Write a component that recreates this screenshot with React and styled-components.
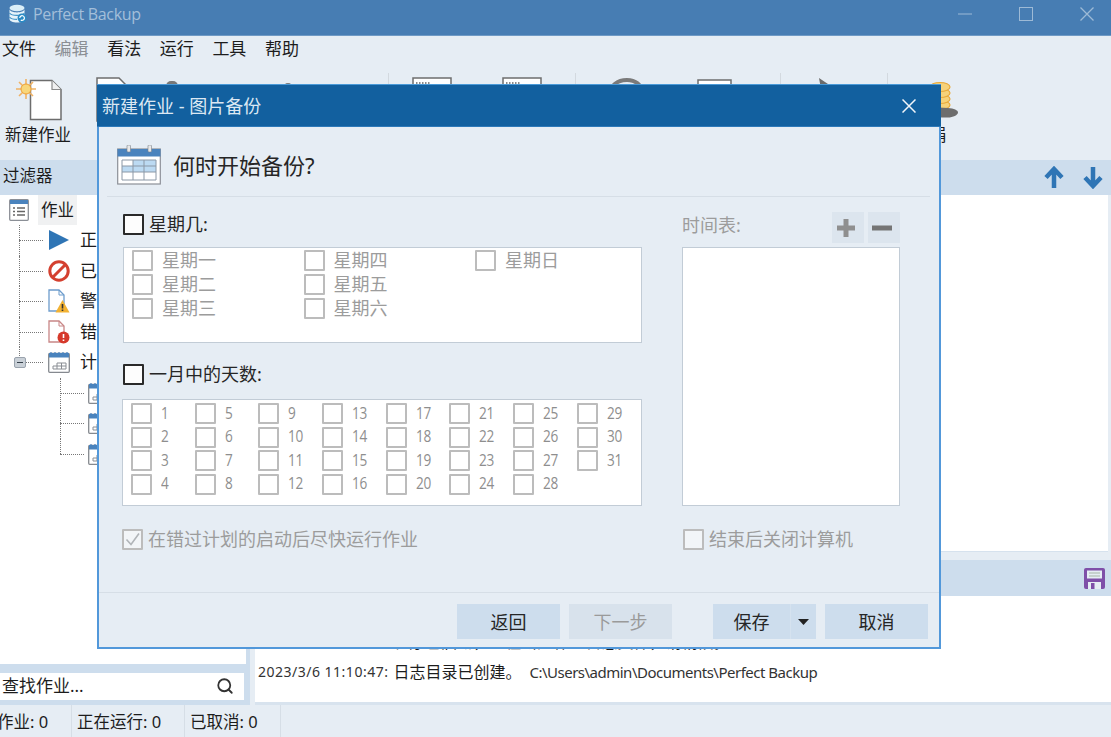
import React from "react"
import styled, { createGlobalStyle } from "styled-components"
import { Search } from "lucide-react"

const FONT = `"Noto Sans", "Noto Sans CJK SC", sans-serif`
const WEEK = ["星期一", "星期二", "星期三", "星期四", "星期五", "星期六", "星期日"]
const DAYS = Array.from({ length: 31 }, (_, i) => i + 1)

const Global = createGlobalStyle`
  html, body { margin: 0; padding: 0; background: #e6edf4; }
  body { font-family: ${FONT}; color: #1c1c1c; }
  * { box-sizing: border-box; }
`

const Shell = styled.div`
  position: relative;
  width: 1111px;
  height: 737px;
  overflow: hidden;
  display: flex;
  flex-direction: column;
  background: #e6edf4;
  font-size: 17px;
  line-height: 24px;
`

const TitleBar = styled.div`
  height: 36px;
  flex: none;
  display: flex;
  align-items: center;
  padding: 0 0 7px 8px;
  background: #477db3;
  border-bottom: 1px solid #6f9ac5;
  color: #a3bfda;
  font-size: 16px;
`
const TitleText = styled.span`
  margin-left: 5px;
  font-family: "Open Sans", sans-serif;
  letter-spacing: -0.3px;
`
const WinButtons = styled.div`
  margin-left: auto;
  display: flex;
  align-items: center;
  gap: 47px;
  padding-right: 17px;
  color: #9dbad6;
`

const MenuBar = styled.div`
  height: 32px;
  flex: none;
  display: flex;
  align-items: center;
  gap: 18.6px;
  padding: 0 0 7px 2px;
`
const MenuItem = styled.span`
  color: ${p => (p.$off ? "#8b8f94" : "#1c1c1c")};
`

const Toolbar = styled.div`
  height: 92px;
  flex: none;
  display: flex;
  align-items: flex-start;
  padding-top: 8px;
`
const Tool = styled.div`
  width: ${p => p.$w}px;
  flex: none;
  display: flex;
  flex-direction: column;
  align-items: center;
  font-size: 16.5px;
  line-height: 22px;
`
const ToolLabel = styled.span`
  margin-top: 2px;
`
const ToolSep = styled.div`
  width: 1px;
  height: 40px;
  flex: none;
  margin: -3px ${p => p.$after}px 0 ${p => p.$before}px;
  background: #d3d9df;
`

const HeaderBar = styled.div`
  height: ${p => p.$h}px;
  flex: none;
  display: flex;
  align-items: center;
  margin-top: ${p => p.$top || 0}px;
  padding: 0 ${p => p.$right || 0}px 0 3px;
  background: #cddded;
`
const HeaderTitle = styled.span`
  margin-top: -3px;
  font-size: 16.5px;
`
const HeaderIcons = styled.div`
  margin-left: auto;
  display: flex;
  gap: 19px;
`

const Workspace = styled.div`
  flex: 1;
  min-height: 0;
  display: grid;
  grid-template-columns: 250px 1fr;
  column-gap: 5px;
`
const LeftColumn = styled.div`
  display: flex;
  flex-direction: column;
  background: #cddded;
`
const TreePane = styled.div`
  flex: 1;
  width: 246px;
  background: #fff;
  overflow: hidden;
`
const TreeRow = styled.div`
  position: relative;
  height: ${p => (p.$root ? 30 : 30.5)}px;
  display: flex;
  align-items: center;
  padding-left: ${p => p.$indent}px;
  gap: ${p => (p.$root ? 8 : 10)}px;
  font-size: ${p => (p.$root ? 16.5 : 17)}px;
  white-space: nowrap;
  &::before {
    content: "";
    display: ${p => (p.$line ? "block" : "none")};
    position: absolute;
    left: ${p => p.$line}px;
    top: 0;
    height: ${p => (p.$last ? "50%" : "100%")};
    border-left: 1px dotted #777;
  }
  &::after {
    content: "";
    display: ${p => (p.$line ? "block" : "none")};
    position: absolute;
    left: ${p => p.$line}px;
    width: 24px;
    top: 50%;
    border-top: 1px dotted #777;
  }
`
const RootLabel = styled.span`
  padding: 3px;
  margin-left: 1px;
  background: #f0f1f2;
`
const Expander = styled.span`
  position: absolute;
  left: 14px;
  top: 10px;
  z-index: 1;
  width: 12px;
  height: 11px;
  border: 1px solid #9aa3ad;
  border-radius: 2px;
  background: #c9d0d7;
  &::after {
    content: "";
    position: absolute;
    left: 2px;
    right: 2px;
    top: 4px;
    height: 1px;
    background: #36404a;
  }
`
const SearchBox = styled.div`
  height: 27px;
  width: 244px;
  margin: 9px 0 5px;
  flex: none;
  display: flex;
  align-items: center;
  justify-content: space-between;
  padding: 0 10px 2px 2px;
  background: #fff;
`
const RightColumn = styled.div`
  display: flex;
  flex-direction: column;
  min-width: 0;
`
const JobPane = styled.div`
  height: 357px;
  flex: none;
  margin-right: 3px;
  background: #fff;
  border-bottom: 1px solid #d6e2ee;
`
const LogPane = styled.div`
  flex: 1;
  min-height: 0;
  background: #fff;
  padding-top: 31px;
  border-bottom: 3px solid #d8e3ee;
  overflow: hidden;
`
const LogLine = styled.div`
  height: 30px;
  display: flex;
  align-items: center;
  gap: 5px;
  padding-left: 3px;
  font-size: 16px;
  white-space: nowrap;
`
const LogTime = styled.span`
  font-size: 14px;
  color: #333;
  letter-spacing: 0.5px;
`
const LogPath = styled.span`
  margin-left: 3px;
  font-size: 15px;
  color: #333;
  letter-spacing: -0.5px;
`

const StatusBar = styled.div`
  height: 32px;
  flex: none;
  display: flex;
  align-items: center;
`
const StatusCell = styled.div`
  width: ${p => p.$w}px;
  height: 100%;
  display: flex;
  align-items: center;
  padding: 2px 0 0 ${p => p.$pad}px;
  border-right: 1px solid #d6dee6;
  white-space: nowrap;
  overflow: hidden;
  font-size: 16.5px;
`
const ClippedText = styled.span`
  margin-left: -3px;
`

const Dialog = styled.div`
  position: absolute;
  left: 97px;
  top: 84px;
  width: 844px;
  height: 565px;
  display: flex;
  flex-direction: column;
  background: #e6edf4;
  border: 2px solid #5298da;
  border-top: 1px solid #4a9ad8;
`
const DialogTitle = styled.div`
  height: 42px;
  flex: none;
  margin: 0 -2px;
  display: flex;
  align-items: center;
  justify-content: space-between;
  padding: 0 25px 0 5px;
  background: #12609f;
  border-bottom: 1px solid #2d79b9;
  color: #dce8f3;
  font-size: 18px;
`
const Heading = styled.div`
  height: 70px;
  flex: none;
  margin: 0 9px 0 8px;
  padding: 6px 0 0 10px;
  display: flex;
  align-items: center;
  gap: 12px;
  border-bottom: 1px solid #d6dee6;
  font-size: 22px;
  color: #262626;
`
const Content = styled.div`
  flex: 1;
  min-height: 0;
  display: grid;
  grid-template-columns: 520px 218px;
  column-gap: 40px;
  padding: 17px 0 0 23px;
`
const Stack = styled.div`
  display: flex;
  flex-direction: column;
  align-items: flex-start;
`
const CheckRow = styled.div`
  display: flex;
  align-items: center;
  gap: ${p => p.$gap || 5}px;
  margin: ${p => p.$margin || "0"};
  height: 21px;
  padding-bottom: 2px;
  font-size: 18px;
  color: ${p => (p.$muted ? "#9c9c9c" : "#262626")};
  white-space: nowrap;
`
const Box = styled.span`
  width: 21px;
  height: 21px;
  margin-bottom: -2px;
  flex: none;
  display: flex;
  align-items: center;
  justify-content: center;
  background: ${p => (p.$dark ? "#fdfdfd" : p.$check ? "#f2f5f8" : "#fff")};
  border: ${p => (p.$dark ? "2px solid #2a2a2a" : "2px solid #bcbcbc")};
  border-radius: 1px;
`
const OptionPanel = styled.div`
  display: grid;
  grid-auto-flow: column;
  grid-template-rows: repeat(${p => p.$rows}, ${p => p.$rowH}px);
  grid-auto-columns: ${p => p.$colW}px;
  width: ${p => p.$w}px;
  height: ${p => p.$h}px;
  margin-left: ${p => p.$left || 0}px;
  padding: ${p => p.$top}px 0 0 8px;
  background: #fff;
  border: 1px solid #c2ccd6;
`
const DayNumber = styled.span`
  display: inline-block;
  font-family: "Open Sans", sans-serif;
  font-size: 17px;
  letter-spacing: -0.2px;
  color: #8e8e8e;
  transform: scaleX(0.8);
  transform-origin: left center;
`
const ScheduleHead = styled.div`
  width: 100%;
  height: 31px;
  margin: -2px 0 4px;
  display: flex;
  align-items: center;
  font-size: 18px;
  color: #9c9c9c;
`
const ScheduleLabel = styled.span`
  margin-top: -5px;
`
const SquareButton = styled.div`
  width: 32px;
  height: 31px;
  margin-left: ${p => (p.$first ? "auto" : "4px")};
  padding-right: 4px;
  display: flex;
  align-items: center;
  justify-content: center;
  background: #dce5ee;
`
const ScheduleList = styled.div`
  width: 218px;
  height: 259px;
  background: #fff;
  border: 1px solid #c2ccd6;
`
const Footer = styled.div`
  height: 55px;
  flex: none;
  display: flex;
  align-items: flex-start;
  justify-content: flex-end;
  gap: 9px;
  padding: 11px 11px 0 0;
  border-top: 1px solid #d6dee6;
`
const Button = styled.div`
  width: 103px;
  height: 35px;
  display: flex;
  align-items: center;
  justify-content: center;
  background: ${p => (p.$off ? "#d8e2ec" : "#cddded")};
  color: ${p => (p.$off ? "#9a9a9a" : "#262626")};
  font-size: 18px;
`
const SplitButton = styled.div`
  width: 103px;
  height: 35px;
  margin-left: 32px;
  display: grid;
  grid-template-columns: 77px 26px;
  background: #cddded;
  font-size: 18px;
  color: #262626;
`
const SplitPart = styled.div`
  display: flex;
  align-items: center;
  justify-content: center;
  border-left: ${p => (p.$arrow ? "1px solid #d5e2ef" : "none")};
`

const AppIcon = () => (
  <svg width="20" height="20" viewBox="0 0 20 20">
    <ellipse cx="9" cy="4" rx="7.5" ry="3.2" fill="#d9eef8" />
    <path d="M1.5 5v10c0 2 3.4 3.5 7.5 3.5s7.5-1.5 7.5-3.5V5c0 2-3.4 3.4-7.5 3.4S1.5 7 1.5 5z" fill="#e6f3fa" />
    <path d="M1.5 9c1.2 1.5 4 2.4 7.5 2.4s6.3-.9 7.5-2.4M1.5 13c1.2 1.5 4 2.4 7.5 2.4" stroke="#3e92c6" strokeWidth="1.2" fill="none" />
    <circle cx="14" cy="14" r="4.5" fill="#2a8ac4" />
    <path d="M11.8 14a2.3 2.3 0 1 1 1 1.9" stroke="#fff" strokeWidth="1.2" fill="none" />
  </svg>
)
const NewDocIcon = () => (
  <svg width="50" height="46" viewBox="0 0 50 46">
    <path d="M17.5 4.5H39l9 9v30H17.5z" fill="#fff" stroke="#6d6d6d" strokeWidth="1.5" />
    <path d="M39 4.5v9h9" fill="#f0f0f0" stroke="#8a8a8a" strokeWidth="1.2" />
    <path d="M13 3v20M3 13h20M6 6l14 14M20 6L6 20" stroke="#f0b264" strokeWidth="1.6" />
    <circle cx="13" cy="13" r="5" fill="#f8d67a" stroke="#ee9f33" />
  </svg>
)
const PeekDoc = () => (
  <svg width="32" height="46" viewBox="0 0 32 46">
    <path d="M1 2h22l8 8v35H1z" fill="#fff" stroke="#6d6d6d" strokeWidth="1.5" />
  </svg>
)
const PeekBlob = ({ w, y }) => (
  <svg width="46" height="46" viewBox="0 0 46 46">
    <rect x={23 - w / 2} y={y} width={w} height="20" rx="5" fill="#777" />
  </svg>
)
const PeekSheet = ({ w, y = 2, ticks }) => (
  <svg width={w} height="46" viewBox={`0 0 ${w} 46`}>
    <rect x="1" y={y} width={w - 2} height="40" fill="#fff" stroke="#6d6d6d" strokeWidth="1.5" />
    {ticks && <path d="M4 7h14" stroke="#8a8a8a" strokeWidth="2" strokeDasharray="1.5 1.5" />}
  </svg>
)
const PeekArc = () => (
  <svg width="40" height="46" viewBox="0 0 40 46">
    <path d="M1 24C3 8 13 4 21 4c8 0 14 4 17 14" fill="none" stroke="#7a7a7a" strokeWidth="4" />
  </svg>
)
const PeekWrench = () => (
  <svg width="40" height="46" viewBox="0 0 40 46">
    <path d="M5 2l9 6 6 3 4-2 7-1 6 8-28 8z" fill="#6b6b6b" />
  </svg>
)
const CoinsIcon = () => (
  <svg width="44" height="46" viewBox="0 0 44 46">
    <g fill="#f6d27a" stroke="#e8a93a" strokeWidth="1.2">
      <ellipse cx="24" cy="29" rx="10" ry="4.5" />
      <ellipse cx="24" cy="23" rx="10" ry="4.5" />
      <ellipse cx="24" cy="17" rx="10" ry="4.5" />
      <ellipse cx="24" cy="11" rx="10" ry="4.5" />
    </g>
    <path d="M4 36c8-5 18-5 28-4 6 .6 10 2 10 4.5s-5 5-10 5c-10 .5-20-2-28-5.5z" fill="#6d6d6d" />
  </svg>
)
const CalendarBig = () => (
  <svg width="44" height="40" viewBox="0 0 44 40">
    <rect x=".7" y="4" width="42.6" height="35" fill="#fff" stroke="#8c9097" strokeWidth="1.2" />
    <rect x=".5" y="4" width="43" height="7.5" fill="#4a83bd" />
    <rect x="10" y="0" width="3.5" height="7" rx="1" fill="#e8e8e8" stroke="#7a8088" strokeWidth=".6" />
    <rect x="31" y="0" width="3.5" height="7" rx="1" fill="#e8e8e8" stroke="#7a8088" strokeWidth=".6" />
    <rect x="5" y="21" width="34" height="6" fill="#bcdaf2" />
    <rect x="16" y="15" width="23" height="6" fill="#bcdaf2" />
    <path d="M5 15h34v20H5zM5 21h34M5 27h34M16 15v20M27 15v20" fill="none" stroke="#8b98a6" strokeWidth="1" />
  </svg>
)
const JobListIcon = () => (
  <svg width="20" height="22" viewBox="0 0 20 22">
    <rect x=".7" y=".7" width="18.6" height="20.6" rx="1" fill="#fff" stroke="#8b8f96" strokeWidth="1.3" />
    <rect x="1" y="1" width="18" height="4" fill="#4a83bd" />
    <path d="M4 9h2M8 9h8M4 12.5h2M8 12.5h8M4 16h2M8 16h8" stroke="#666" strokeWidth="1.3" />
  </svg>
)
const PlayIcon = () => (
  <svg width="22" height="22" viewBox="0 0 22 22">
    <path d="M1 1l20 10L1 21z" fill="#2f75b5" />
  </svg>
)
const BanIcon = () => (
  <svg width="22" height="22" viewBox="0 0 22 22">
    <circle cx="11" cy="11" r="9.2" fill="#fff" stroke="#d4402f" strokeWidth="3" />
    <path d="M4.5 17.5l13-13" stroke="#d4402f" strokeWidth="3" />
  </svg>
)
const DocAlert = ({ stroke, children }) => (
  <svg width="22" height="24" viewBox="0 0 22 24">
    <path d="M1 1h10l5 5v16H1z" fill="#fff" stroke={stroke} strokeWidth="1.3" />
    <path d="M11 1v5h5" fill="none" stroke={stroke} strokeWidth="1" />
    {children}
  </svg>
)
const GridCalendar = () => (
  <svg width="22" height="22" viewBox="0 0 22 22">
    <rect x=".7" y="2.5" width="20.6" height="18.8" rx="1" fill="#fff" stroke="#85898f" strokeWidth="1.3" />
    <rect x="1" y="2" width="20" height="4.5" fill="#4a83bd" />
    <path d="M3 1v3M7 1v3M11 1v3M15 1v3M19 1v3" stroke="#4a83bd" strokeWidth="1.2" />
    <path d="M9 12h9v6H5v-3h13M9 12v6M13.5 12v6" fill="none" stroke="#8a8e94" strokeWidth="1" />
  </svg>
)
const ArrowUp = () => (
  <svg width="20" height="23" viewBox="0 0 20 23">
    <path d="M10 22V4M2 11.5L10 3l8 8.5" fill="none" stroke="#2f75b5" strokeWidth="4.5" />
  </svg>
)
const ArrowDown = () => (
  <svg width="20" height="23" viewBox="0 0 20 23">
    <path d="M10 1v18M2 11.5L10 20l8-8.5" fill="none" stroke="#2f75b5" strokeWidth="4.5" />
  </svg>
)
const SaveIcon = () => (
  <svg width="21" height="21" viewBox="0 0 21 21">
    <rect width="21" height="21" rx="2" fill="#7f4fa8" />
    <rect x="3" y="2.5" width="15" height="8" fill="#e6edf4" />
    <path d="M5 5h11M5 8h11" stroke="#a6b5a6" strokeWidth="1.2" />
    <rect x="4" y="14" width="13" height="7" fill="#e6edf4" />
    <rect x="7" y="15" width="3.5" height="6" fill="#7f4fa8" />
  </svg>
)
const CloseLines = ({ size, color, width }) => (
  <svg width={size} height={size} viewBox="0 0 14 14">
    <path d="M.5.5l13 13M13.5.5l-13 13" stroke={color} strokeWidth={width} fill="none" />
  </svg>
)
const Check = () => (
  <svg width="17" height="17" viewBox="0 0 17 17">
    <path d="M2.5 8.5l4.5 5L15 2.5" fill="none" stroke="#b0b4b8" strokeWidth="1.6" />
  </svg>
)

const treeChildren = [
  { icon: <PlayIcon />, label: "正在运行" },
  { icon: <BanIcon />, label: "已取消" },
  {
    icon: (
      <DocAlert stroke="#6d9ccc">
        <path d="M14.5 11l7 12.5h-14z" fill="#f2b233" />
        <path d="M14.5 15v4.5M14.5 20.5V22" stroke="#333" strokeWidth="1.6" />
      </DocAlert>
    ),
    label: "警告",
  },
  {
    icon: (
      <DocAlert stroke="#c88686">
        <circle cx="15.5" cy="17.5" r="6" fill="#d6392b" />
        <path d="M15.5 14v4M15.5 19.5V21" stroke="#fff" strokeWidth="1.6" />
      </DocAlert>
    ),
    label: "错误",
  },
]

export default function App() {
  return (
    <Shell>
      <Global />
      <TitleBar>
        <AppIcon />
        <TitleText>Perfect Backup</TitleText>
        <WinButtons>
          <svg width="14" height="14" viewBox="0 0 14 14"><path d="M0 7h14" stroke="currentColor" strokeWidth="1" /></svg>
          <svg width="14" height="14" viewBox="0 0 14 14"><rect x=".5" y=".5" width="13" height="13" fill="none" stroke="currentColor" /></svg>
          <CloseLines size={14} color="#9dbad6" width={1.3} />
        </WinButtons>
      </TitleBar>

      <MenuBar>
        <MenuItem>文件</MenuItem>
        <MenuItem $off>编辑</MenuItem>
        <MenuItem>看法</MenuItem>
        <MenuItem>运行</MenuItem>
        <MenuItem>工具</MenuItem>
        <MenuItem>帮助</MenuItem>
      </MenuBar>

      <Toolbar>
        <Tool $w={76}><NewDocIcon /><ToolLabel>新建作业</ToolLabel></Tool>
        <Tool $w={72}><PeekDoc /></Tool>
        <Tool $w={48}><PeekBlob w={12} y={5} /></Tool>
        <Tool $w={184}><PeekBlob w={10} y={7} /></Tool>
        <ToolSep $before={8} $after={3} />
        <Tool $w={80}><PeekSheet w={40} ticks /></Tool>
        <Tool $w={100}><PeekSheet w={40} ticks /></Tool>
        <ToolSep $before={3} $after={3} />
        <Tool $w={94}><PeekArc /></Tool>
        <Tool $w={82}><PeekSheet w={35} y={4} /></Tool>
        <ToolSep $before={25} $after={3} />
        <Tool $w={100}><PeekWrench /></Tool>
        <ToolSep $before={3} $after={3} />
        <Tool $w={94}><CoinsIcon /><ToolLabel>捐</ToolLabel></Tool>
      </Toolbar>

      <HeaderBar $h={35} $right={8}>
        <HeaderTitle>过滤器</HeaderTitle>
        <HeaderIcons>
          <ArrowUp />
          <ArrowDown />
        </HeaderIcons>
      </HeaderBar>

      <Workspace>
        <LeftColumn>
          <TreePane>
            <TreeRow $root $indent={9}>
              <JobListIcon />
              <RootLabel>作业</RootLabel>
            </TreeRow>
            {treeChildren.map(row => (
              <TreeRow key={row.label} $indent={48} $line={19}>
                {row.icon}
                {row.label}
              </TreeRow>
            ))}
            <TreeRow $indent={48} $line={19} $last>
              <Expander />
              <GridCalendar />
              计划
            </TreeRow>
            <TreeRow $indent={88} $line={60}><GridCalendar />每日</TreeRow>
            <TreeRow $indent={88} $line={60}><GridCalendar />每周</TreeRow>
            <TreeRow $indent={88} $line={60} $last><GridCalendar />每月</TreeRow>
          </TreePane>
          <SearchBox>
            查找作业...
            <Search size={18} strokeWidth={2.4} color="#333" />
          </SearchBox>
        </LeftColumn>

        <RightColumn>
          <JobPane />
          <HeaderBar $h={36} $right={6} $top={8}>
            <HeaderIcons>
              <SaveIcon />
            </HeaderIcons>
          </HeaderBar>
          <LogPane>
            <LogLine>
              <LogTime>2023/3/6 11:10:47:</LogTime>
              程序已启动，正在新建作业日志文件，请稍候。
            </LogLine>
            <LogLine>
              <LogTime>2023/3/6 11:10:47:</LogTime>
              日志目录已创建。
              <LogPath>C:\Users\admin\Documents\Perfect Backup</LogPath>
            </LogLine>
          </LogPane>
        </RightColumn>
      </Workspace>

      <StatusBar>
        <StatusCell $w={72} $pad={0}><ClippedText>作业: 0</ClippedText></StatusCell>
        <StatusCell $w={113} $pad={5}>正在运行: 0</StatusCell>
        <StatusCell $w={96} $pad={5}>已取消: 0</StatusCell>
      </StatusBar>

      <Dialog>
        <DialogTitle>
          新建作业 - 图片备份
          <CloseLines size={14} color="#f2f6fa" width={1.5} />
        </DialogTitle>
        <Heading>
          <CalendarBig />
          何时开始备份?
        </Heading>
        <Content>
          <Stack>
            <CheckRow $margin="0 0 12px 1px"><Box $dark />星期几:</CheckRow>
            <OptionPanel $rows={3} $rowH={24} $colW={171.5} $w={519} $h={96} $left={1} $top={2}>
              {WEEK.map(day => (
                <CheckRow key={day} $muted $gap={9}><Box />{day}</CheckRow>
              ))}
            </OptionPanel>
            <CheckRow $margin="21px 0 14px 1px"><Box $dark />一月中的天数:</CheckRow>
            <OptionPanel $rows={4} $rowH={23.5} $colW={63.7} $w={520} $h={107} $top={3}>
              {DAYS.map(day => (
                <CheckRow key={day} $muted $gap={9}><Box /><DayNumber>{day}</DayNumber></CheckRow>
              ))}
            </OptionPanel>
            <CheckRow $muted $margin="23px 0 0 0"><Box $check><Check /></Box>在错过计划的启动后尽快运行作业</CheckRow>
          </Stack>
          <Stack>
            <ScheduleHead>
              <ScheduleLabel>时间表:</ScheduleLabel>
              <SquareButton $first>
                <svg width="20" height="20" viewBox="0 0 20 20"><path d="M10 1v18M1 10h18" stroke="#8f8f8f" strokeWidth="5" /></svg>
              </SquareButton>
              <SquareButton>
                <svg width="20" height="6" viewBox="0 0 20 6"><path d="M0 3h20" stroke="#757575" strokeWidth="5" /></svg>
              </SquareButton>
            </ScheduleHead>
            <ScheduleList />
            <CheckRow $muted $margin="23px 0 0 1px"><Box $check />结束后关闭计算机</CheckRow>
          </Stack>
        </Content>
        <Footer>
          <Button>返回</Button>
          <Button $off>下一步</Button>
          <SplitButton>
            <SplitPart>保存</SplitPart>
            <SplitPart $arrow>
              <svg width="11" height="6" viewBox="0 0 11 6"><path d="M0 0h11L5.5 6z" fill="#222" /></svg>
            </SplitPart>
          </SplitButton>
          <Button>取消</Button>
        </Footer>
      </Dialog>
    </Shell>
  )
}
